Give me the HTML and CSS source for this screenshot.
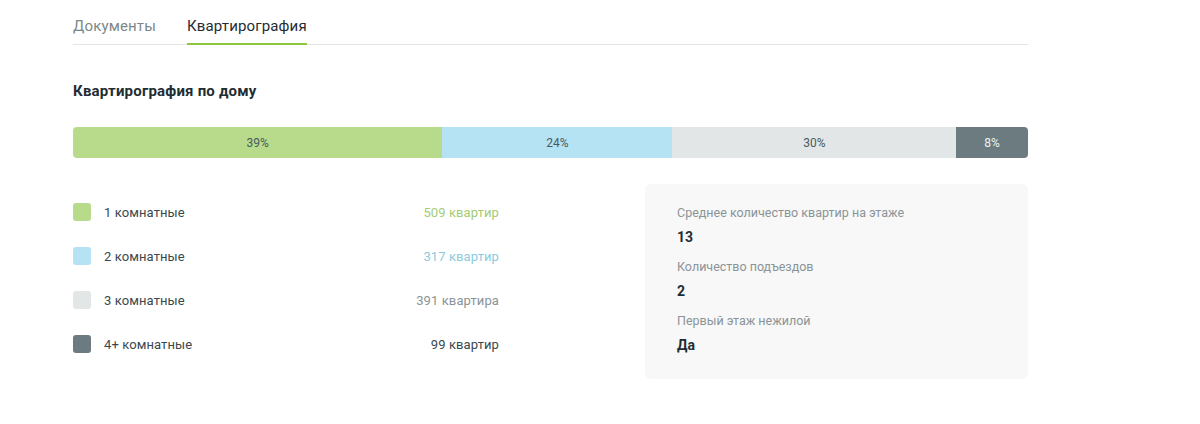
FILE: index.html
```html
<!DOCTYPE html>
<html lang="ru">
<head>
   <meta charset="UTF-8" />
   <meta name="viewport" content="width=device-width, initial-scale=1.0"/>
   <title>Квартирография</title>
   <link rel="stylesheet" href="styles.css">
</head>
<body>

   <div class="page">
      <div class="tabs">
         <span class="tab">Документы</span>
         <span class="tab active">Квартирография</span>
      </div>

      <h3 class="title">Квартирография по дому</h3>

      <div class="bar">
         <div class="seg seg-1" style="flex-grow:509">39%</div>
         <div class="seg seg-2" style="flex-grow:317">24%</div>
         <div class="seg seg-3" style="flex-grow:391">30%</div>
         <div class="seg seg-4" style="flex-grow:99">8%</div>
      </div>

      <div class="details">
         <ul class="legend">
            <li class="row">
               <span class="box box-1"></span>
               <span class="name">1 комнатные</span>
               <span class="count count-1">509 квартир</span>
            </li>
            <li class="row">
               <span class="box box-2"></span>
               <span class="name">2 комнатные</span>
               <span class="count count-2">317 квартир</span>
            </li>
            <li class="row">
               <span class="box box-3"></span>
               <span class="name">3 комнатные</span>
               <span class="count count-3">391 квартира</span>
            </li>
            <li class="row">
               <span class="box box-4"></span>
               <span class="name">4+ комнатные</span>
               <span class="count count-4">99 квартир</span>
            </li>
         </ul>

         <div class="info">
            <div class="info-item">
               <div class="info-label">Среднее количество квартир на этаже</div>
               <div class="info-value">13</div>
            </div>
            <div class="info-item">
               <div class="info-label">Количество подъездов</div>
               <div class="info-value">2</div>
            </div>
            <div class="info-item">
               <div class="info-label">Первый этаж нежилой</div>
               <div class="info-value">Да</div>
            </div>
         </div>
      </div>
   </div>

</body>
</html>
```

FILE: styles.css
```css
* {
   margin: 0;
   padding: 0;
   box-sizing: border-box;
}
body {
   font-family: Roboto, Arial, sans-serif;
   color: #2b3a40;
   background: #fff;
}
.page {
   width: 955px;
   margin-left: 73px;
   padding-top: 16px;
}
.tabs {
   display: flex;
   gap: 31px;
   border-bottom: 1px solid #e4e6e6;
}
.tab {
   font-size: 15px;
   line-height: 20px;
   letter-spacing: 0.15px;
   padding-bottom: 7px;
   color: #7c878b;
   margin-bottom: -1px;
   border-bottom: 2px solid transparent;
}
.tab.active {
   color: #1f2d33;
   border-bottom-color: #8cc63f;
}
.title {
   margin-top: 37px;
   font-size: 15px;
   line-height: 18px;
   letter-spacing: 0.2px;
   font-weight: bold;
   color: #1f2d33;
}
.bar {
   display: flex;
   height: 31px;
   margin-top: 27px;
   border-radius: 4px;
   overflow: hidden;
}
.seg {
   flex-basis: 0;
   display: flex;
   align-items: center;
   justify-content: center;
   font-size: 12px;
   color: #4a5a60;
}
.seg-1 { background: #b8db8b; }
.seg-2 { background: #b6e3f3; }
.seg-3 { background: #e3e6e7; }
.seg-4 { background: #6b7b80; color: #eef2f3; }
.details {
   display: flex;
   justify-content: space-between;
   margin-top: 26px;
}
.legend {
   list-style: none;
   width: 426px;
   padding-top: 19px;
}
.row {
   display: flex;
   align-items: center;
   height: 18px;
   margin-bottom: 26px;
   font-size: 13px;
   letter-spacing: 0.1px;
}
.box {
   width: 18px;
   height: 18px;
   border-radius: 3px;
   margin-right: 13px;
}
.box-1 { background: #b8db8b; }
.box-2 { background: #b6e3f3; }
.box-3 { background: #e3e6e7; }
.box-4 { background: #6b7b80; }
.name {
   flex: 1;
   color: #3a484d;
}
.count-1 { color: #a3cc73; }
.count-2 { color: #8ccbe0; }
.count-3 { color: #8a9497; }
.count-4 { color: #3a484d; }
.info {
   width: 383px;
   height: 195px;
   background: #f8f8f8;
   border-radius: 6px;
   padding: 21px 32px;
}
.info-item {
   margin-bottom: 13px;
}
.info-label {
   font-size: 12.5px;
   line-height: 16px;
   color: #8a9497;
}
.info-value {
   margin-top: 7px;
   font-size: 14px;
   line-height: 18px;
   font-weight: bold;
   color: #1f2d33;
}
```
